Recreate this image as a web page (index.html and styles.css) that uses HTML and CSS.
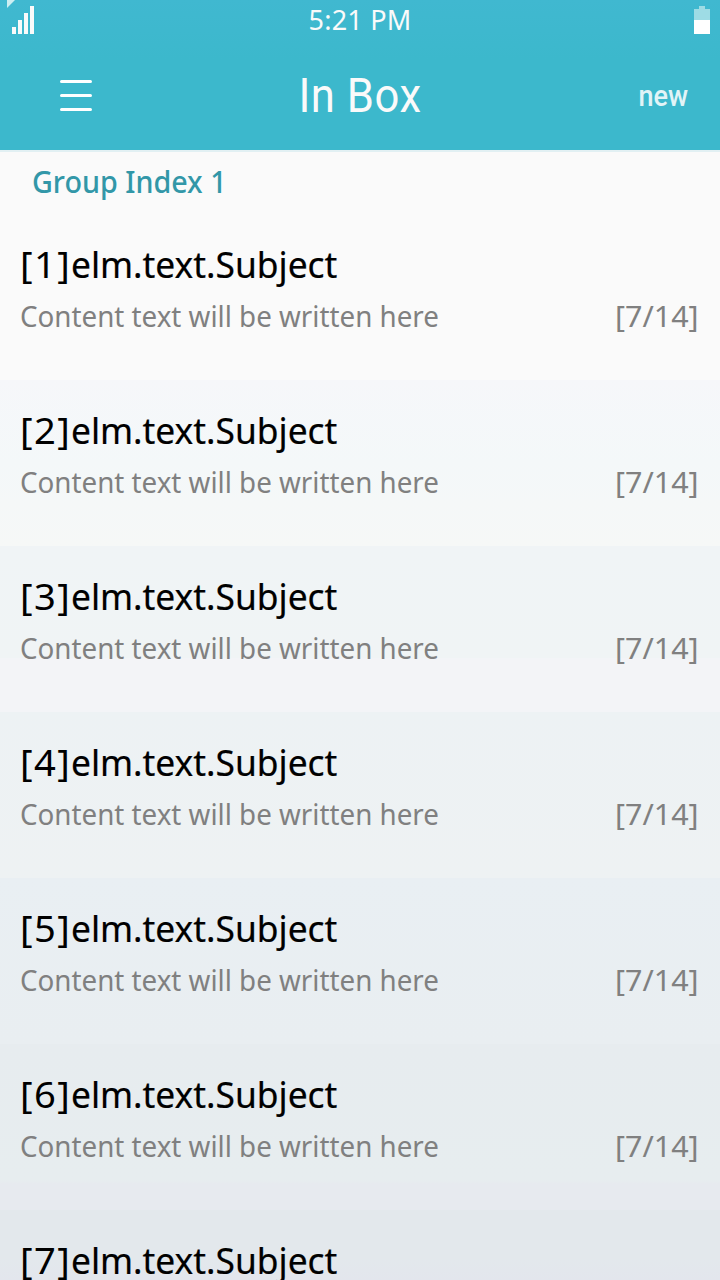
FILE: index.html
```html
<!DOCTYPE html>
<html lang="en">
<head>
<meta charset="utf-8">
<title>In Box</title>
<link rel="stylesheet" href="styles.css">
</head>
<body>
<div class="screen">
  <header class="header">
    <div class="status">
      <svg class="signal" width="40" height="40" viewBox="0 0 40 40"><path d="M7 0h8L7 8z" fill="#cdeef2"/><path d="M12 27h4v7h-4zM18 20h4v14h-4zM24 13h4v21h-4zM30 6h4v28h-4z" fill="#fafafa"/></svg>
      <span class="time">5:21 PM</span>
      <svg class="battery" width="16" height="40" viewBox="0 0 16 40"><path d="M5 6h6v3h5v11H0V9h5z" fill="#9edce5"/><path d="M0 20h16v14H0z" fill="#fff"/></svg>
    </div>
    <div class="titlebar">
      <svg class="menu" width="32" height="32" viewBox="0 0 32 32"><path d="M1.5 1.5h29M1.5 15.5h29M1.5 29.5h29" stroke="#fff" stroke-width="3" stroke-linecap="round"/></svg>
      <h1 class="title">In Box</h1>
      <span class="new">new</span>
    </div>
  </header>
  <main class="list">
    <h2 class="group">Group Index 1</h2>
    <div class="row r1"><div class="subject"><span class="index">[1]</span><span class="name">elm.text.Subject</span></div><div class="detail"><span class="content">Content text will be written here</span><span class="count">[7/14]</span></div></div>
    <div class="row r2"><div class="subject"><span class="index">[2]</span><span class="name">elm.text.Subject</span></div><div class="detail"><span class="content">Content text will be written here</span><span class="count">[7/14]</span></div></div>
    <div class="row r3"><div class="subject"><span class="index">[3]</span><span class="name">elm.text.Subject</span></div><div class="detail"><span class="content">Content text will be written here</span><span class="count">[7/14]</span></div></div>
    <div class="row r4"><div class="subject"><span class="index">[4]</span><span class="name">elm.text.Subject</span></div><div class="detail"><span class="content">Content text will be written here</span><span class="count">[7/14]</span></div></div>
    <div class="row r5"><div class="subject"><span class="index">[5]</span><span class="name">elm.text.Subject</span></div><div class="detail"><span class="content">Content text will be written here</span><span class="count">[7/14]</span></div></div>
    <div class="row r6"><div class="subject"><span class="index">[6]</span><span class="name">elm.text.Subject</span></div><div class="detail"><span class="content">Content text will be written here</span><span class="count">[7/14]</span></div></div>
    <div class="row r7"><div class="subject"><span class="index">[7]</span><span class="name">elm.text.Subject</span></div></div>
  </main>
</div>
</body>
</html>
```
FILE: styles.css
```css
* { box-sizing: border-box; margin: 0; }
body { overflow: hidden; font-family: "Noto Sans", "Open Sans", sans-serif; }
.screen { width: 720px; height: 1280px; overflow: hidden; background: #fafafa; }
svg { display: block; }
.header { height: 152px; background: linear-gradient(#40b8d0, #3cb8cc 60px, #3cb8cc); border-bottom: 2px solid #e2f0f3; }
.status { display: grid; grid-template-columns: 60px 1fr 60px; height: 40px; }
.battery { justify-self: end; margin-right: 10px; }
.time { text-align: center; color: #fafafa; font-size: 27px; line-height: 40px; letter-spacing: .2px; }
.titlebar { display: grid; grid-template-columns: 180px 1fr 180px; height: 110px; }
.menu { margin: 40px 0 0 60px; }
.title { text-align: center; color: #fafafa; font: 400 49px/112px Roboto, sans-serif; letter-spacing: .6px; transform: scaleX(.89); }
.new { justify-self: end; padding-right: 32px; color: #e2f4f7; font: 500 30px/112px Roboto, sans-serif; transform: scaleX(.9); transform-origin: calc(100% - 32px) 0; }
.group { height: 62px; padding-left: 32px; color: #3297a8; font-size: 30px; font-weight: 500; line-height: 60px; white-space: nowrap; transform: scaleX(.957); transform-origin: 32px 0; }
.row { height: 166px; padding: 24px 21px 0 20px; }
.subject { display: flex; height: 54px; font-size: 36px; line-height: 54px; color: #000; white-space: nowrap; }
.index { width: 51px; letter-spacing: 1.4px; transform: scaleX(1.06); transform-origin: 0 0; }
.name { transform: scaleX(.982); transform-origin: 0 0; -webkit-text-stroke: .2px; }
.detail { display: flex; justify-content: space-between; height: 48px; font-size: 29px; line-height: 47px; color: #808080; white-space: nowrap; }
.content { transform: scaleX(.957); transform-origin: 0 0; }
.count { line-height: 48px; transform: scaleX(1.05); transform-origin: 100% 0; }
.r1 { background: #fafafa; }
.r2 { background: linear-gradient(#f6f7fa, #f4f8f9 50%, #f6f8f7); }
.r3 { background: linear-gradient(#f0f4f6, #f0f4f5 112px, #f3f4f7 112px, #f3f4f7); }
.r4 { background: linear-gradient(#edf2f4, #eef2f3); }
.r5 { background: linear-gradient(#e9eff3, #e9eef1); }
.r6 { background: linear-gradient(#e7ecef, #e7edef 136px, #e7eaef 140px, #e7eaef); }
.r7 { background: linear-gradient(#e3e8ec, #e3e8ec 50px, #e3e6ed 70px); }
```
